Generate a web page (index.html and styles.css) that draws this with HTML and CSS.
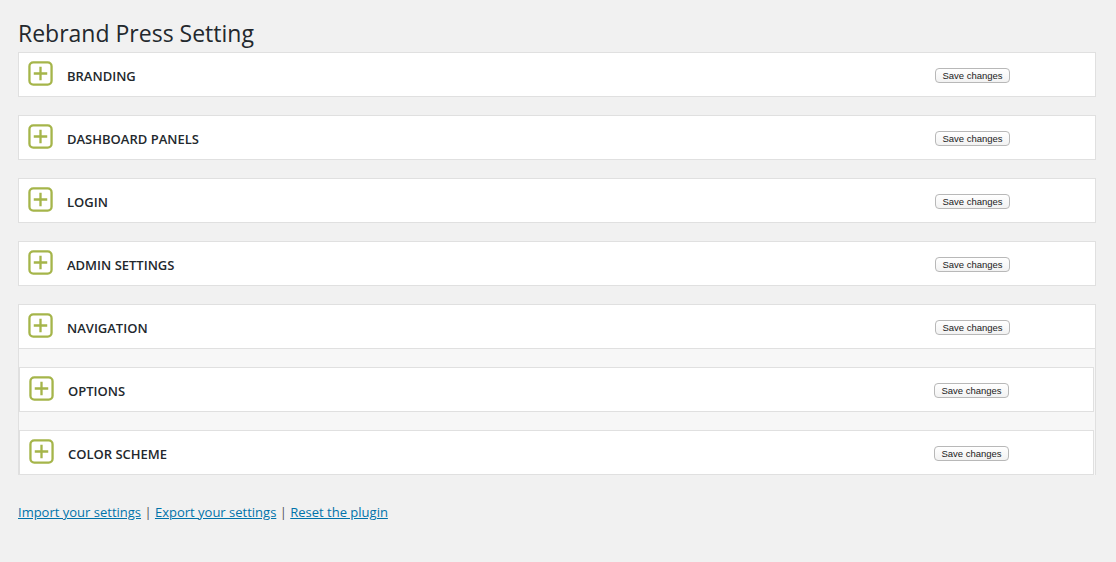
FILE: index.html
```html
<!DOCTYPE html>
<html lang="en">
<head>
    <meta charset="UTF-8">
    <meta name="viewport" content="width=device-width, initial-scale=1.0">
    <title>Rebrand Press Setting</title>
    <link rel="stylesheet" href="styles.css">
</head>
<body>
    <div class="wrap">
        <h1>Rebrand Press Setting</h1>

        <!-- Settings sections -->
        <div class="sections">
            <div class="panel">
                <span class="toggle"><svg viewBox="0 0 26 26"><rect x="1.5" y="1.5" width="23" height="23" rx="4"/><path d="M13 6v14M6 13h14"/></svg></span>
                <span class="label">Branding</span>
                <button class="save">Save changes</button>
            </div>
            <div class="panel">
                <span class="toggle"><svg viewBox="0 0 26 26"><rect x="1.5" y="1.5" width="23" height="23" rx="4"/><path d="M13 6v14M6 13h14"/></svg></span>
                <span class="label">Dashboard Panels</span>
                <button class="save">Save changes</button>
            </div>
            <div class="panel">
                <span class="toggle"><svg viewBox="0 0 26 26"><rect x="1.5" y="1.5" width="23" height="23" rx="4"/><path d="M13 6v14M6 13h14"/></svg></span>
                <span class="label">Login</span>
                <button class="save">Save changes</button>
            </div>
            <div class="panel">
                <span class="toggle"><svg viewBox="0 0 26 26"><rect x="1.5" y="1.5" width="23" height="23" rx="4"/><path d="M13 6v14M6 13h14"/></svg></span>
                <span class="label">Admin Settings</span>
                <button class="save">Save changes</button>
            </div>
            <div class="group">
                <div class="panel">
                    <span class="toggle"><svg viewBox="0 0 26 26"><rect x="1.5" y="1.5" width="23" height="23" rx="4"/><path d="M13 6v14M6 13h14"/></svg></span>
                    <span class="label">Navigation</span>
                    <button class="save">Save changes</button>
                </div>
                <div class="group-body">
                    <div class="panel inner">
                        <span class="toggle"><svg viewBox="0 0 26 26"><rect x="1.5" y="1.5" width="23" height="23" rx="4"/><path d="M13 6v14M6 13h14"/></svg></span>
                        <span class="label">Options</span>
                        <button class="save">Save changes</button>
                    </div>
                    <div class="panel inner">
                        <span class="toggle"><svg viewBox="0 0 26 26"><rect x="1.5" y="1.5" width="23" height="23" rx="4"/><path d="M13 6v14M6 13h14"/></svg></span>
                        <span class="label">Color Scheme</span>
                        <button class="save">Save changes</button>
                    </div>
                </div>
            </div>
        </div>

        <!-- Import / export links -->
        <p class="links">
            <a href="#">Import your settings</a> |
            <a href="#">Export your settings</a> |
            <a href="#">Reset the plugin</a>
        </p>
    </div>
</body>
</html>
```

FILE: styles.css
```css
body {
    margin: 0;
    background-color: #f1f1f1;
    font-family: "Open Sans", sans-serif;
    color: #23282d;
}
.wrap {
    padding: 0 20px 0 18px;
}
h1 {
    font-size: 23px;
    font-weight: 400;
    line-height: 29px;
    margin: 0;
    padding: 19px 0 4px;
}
.sections {
    display: flex;
    flex-direction: column;
    gap: 18px;
}
.panel {
    display: flex;
    align-items: center;
    box-sizing: content-box;
    height: 41px;
    padding: 2px 85px 0 9px;
    background: #ffffff;
    border: 1px solid #e0e0e0;
}
.toggle {
    width: 25px;
    height: 25px;
    margin-top: -4px;
}
.toggle svg {
    display: block;
    width: 25px;
    height: 25px;
    fill: none;
    stroke: #a5b54a;
    stroke-width: 2.4;
}
.label {
    flex: 1;
    margin-left: 14px;
    font-size: 13px;
    font-weight: 600;
    text-transform: uppercase;
}
.save {
    font-family: "Liberation Sans", Arial, sans-serif;
    font-size: 9.5px;
    color: #222222;
    height: 15px;
    width: 75px;
    padding: 0;
    background: linear-gradient(#ffffff, #f2f2f2);
    border: 1px solid #b8b8b8;
    border-radius: 4px;
}
.group-body {
    display: flex;
    flex-direction: column;
    gap: 18px;
    padding-top: 18px;
    background: #f7f7f7;
    border: 1px solid #e0e0e0;
    border-top: none;
    border-bottom: none;
}
.panel.inner {
    margin-right: 1px;
    padding-right: 84px;
}
.links {
    margin: 28px 0 0;
    font-size: 13px;
    color: #555555;
}
.links a {
    color: #0073aa;
}
```
